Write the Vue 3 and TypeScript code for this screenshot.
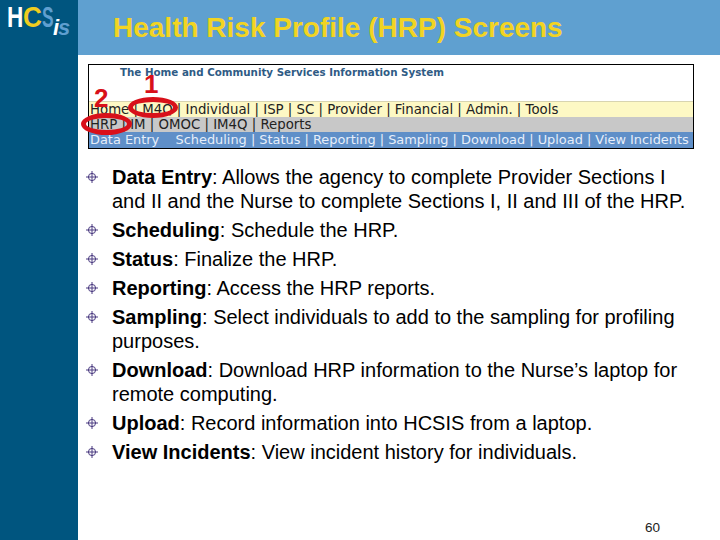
<script setup lang="ts">
interface Item { term: string; text: string }
const items: Item[] = [
  { term: 'Data Entry', text: ': Allows the agency to complete Provider Sections I and II and the Nurse to complete Sections I, II and III of the HRP.' },
  { term: 'Scheduling', text: ': Schedule the HRP.' },
  { term: 'Status', text: ': Finalize the HRP.' },
  { term: 'Reporting', text: ': Access the HRP reports.' },
  { term: 'Sampling', text: ': Select individuals to add to the sampling for profiling purposes.' },
  { term: 'Download', text: ': Download HRP information to the Nurse’s laptop for remote computing.' },
  { term: 'Upload', text: ': Record information into HCSIS from a laptop.' },
  { term: 'View Incidents', text: ': View incident history for individuals.' },
]
</script>

<template>
  <div class="slide">
    <aside class="side">
      <div class="logo"><span class="h">H</span><span class="c">C</span><span class="s">S</span><span class="i">i</span><span class="s2">s</span></div>
    </aside>
    <main class="main">
      <header class="head"><h1>Health Risk Profile (HRP) Screens</h1></header>
      <section class="shot">
        <div class="shot-title">The Home and Community Services Information System</div>
        <div class="row yellow">Home | M4Q | Individual | ISP | SC | Provider | Financial | Admin. | Tools</div>
        <div class="row gray">HRP | IM | OMOC | IM4Q | Reports</div>
        <div class="row blue">Data Entry &nbsp; &nbsp;Scheduling | Status | Reporting | Sampling | Download | Upload | View Incidents</div>
        <span class="num n1">1</span>
        <span class="num n2">2</span>
        <span class="ring r1"></span>
        <span class="ring r2"></span>
      </section>
      <ul class="list">
        <li v-for="item in items" :key="item.term">
          <svg class="bullet" width="12" height="12" viewBox="0 0 12 12">
            <circle cx="6" cy="6" r="3.6" fill="none" stroke="#4a3a80" stroke-width="1" />
            <path d="M6 0v12M0 6h12" stroke="#4a3a80" stroke-width="1" />
          </svg>
          <span><b>{{ item.term }}</b>{{ item.text }}</span>
        </li>
      </ul>
      <div class="page">60</div>
    </main>
  </div>
</template>

<style scoped>
.slide {
  display: flex;
  width: 720px;
  height: 540px;
  overflow: hidden;
  background: #fff;
  font-family: "Liberation Sans", Arial, sans-serif;
}
.side {
  width: 78px;
  flex: none;
  background: #00557f;
}
.logo {
  display: flex;
  align-items: baseline;
  padding: 0 0 0 7px;
  font-weight: 700;
  font-size: 29px;
  line-height: 34px;
  white-space: nowrap;
}
.h { color: #fff; width: 16px; display: inline-block; transform: scaleX(0.78); transform-origin: left; }
.c { color: #f0cc1e; width: 19px; display: inline-block; transform: scaleX(0.9); transform-origin: left; }
.s { color: #5f9fd0; width: 11px; display: inline-block; transform: scaleX(0.6); transform-origin: left; }
.i { color: #fff; font-style: italic; font-size: 22px; line-height: 22px; width: 5px; display: inline-block; position: relative; top: 8px; }
.s2 { color: #5f9fd0; font-style: italic; font-size: 22px; line-height: 22px; display: inline-block; position: relative; top: 8px; }
.main {
  flex: 1;
  min-width: 0;
  display: flex;
  flex-direction: column;
  padding-bottom: 4px;
}
.head {
  height: 55px;
  background: #5fa0d0;
  padding-left: 35px;
  display: flex;
  align-items: center;
}
h1 {
  margin: 0;
  font-size: 28px;
  font-weight: 700;
  color: #f2d422;
}
.shot {
  position: relative;
  margin: 9px 26px 0 10px;
  height: 85px;
  border: 1px solid #000;
  box-sizing: border-box;
  background: #fff;
  display: flex;
  flex-direction: column;
  font-family: "DejaVu Sans", Verdana, sans-serif;
  font-size: 13.3px;
  white-space: nowrap;
}
.shot-title {
  height: 36px;
  padding: 0 0 0 31px;
  font-size: 10.3px;
  line-height: 14px;
  font-weight: 700;
  color: #2f5b85;
}
.row {
  height: 16px;
  line-height: 16px;
  padding-left: 1px;
  color: #222;
}
.yellow { background: #fdf8c4; border-top: 1px solid #d8d4b0; box-sizing: border-box; }
.gray { background: #c8c8c8; height: 15px; line-height: 15px; }
.blue { background: #5f8fc8; color: #e6eefa; flex: 1; font-size: 12.9px; }
.num {
  position: absolute;
  font-family: "Liberation Sans", Arial, sans-serif;
  font-weight: 700;
  font-size: 26px;
  line-height: 26px;
  color: #d8101a;
}
.n1 { left: 55px; top: 6px; }
.n2 { left: 5px; top: 20px; }
.ring {
  position: absolute;
  border: 5px solid #d8101a;
  border-radius: 50%;
  box-sizing: border-box;
}
.r1 { left: 39px; top: 32px; width: 50px; height: 21px; }
.r2 { left: -8px; top: 48px; width: 51px; height: 22px; }
.list {
  list-style: none;
  margin: 16px 20px 0 0;
  padding: 0 0 0 34px;
  display: flex;
  flex-direction: column;
  gap: 5px;
  font-size: 20px;
  line-height: 24px;
  color: #000;
}
.list li {
  display: flex;
  gap: 0;
}
.bullet {
  flex: none;
  width: 12px;
  height: 12px;
  margin: 6px 14px 0 -26px;
}
b { font-weight: 700; }
.page {
  margin-top: auto;
  align-self: flex-end;
  margin-right: 60px;
  font-size: 13.5px;
  line-height: 16px;
  color: #222;
}
</style>
